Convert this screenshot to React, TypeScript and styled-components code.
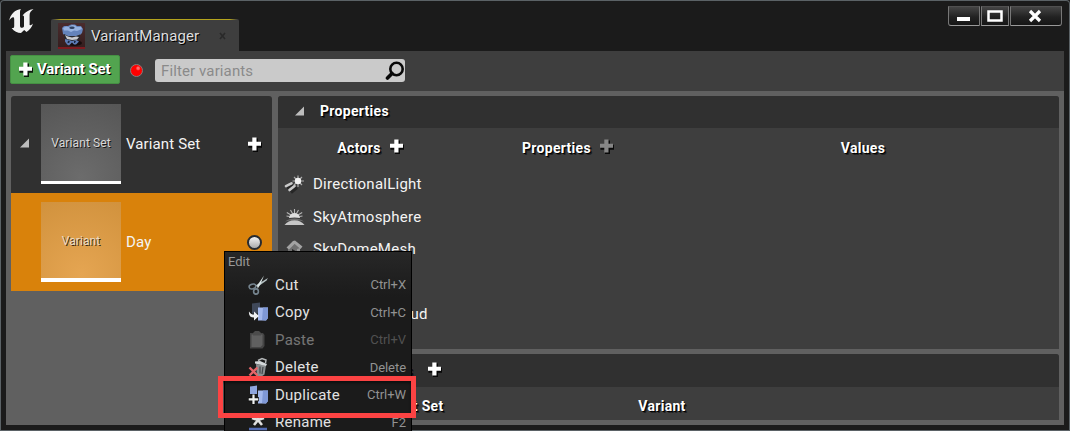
import React from 'react';
import styled, { createGlobalStyle } from 'styled-components';

const Global = createGlobalStyle`
  * { box-sizing: border-box; }
  body { margin: 0; background: #1b1b1b; overflow: hidden; font-family: Roboto, "Liberation Sans", sans-serif; }
  svg { display: block; flex: none; }
`;

const Window = styled.div`
  position: relative;
  width: 1070px;
  height: 431px;
  padding: 1px 6px;
  display: flex;
  flex-direction: column;
  overflow: hidden;
  background: #1b1b1b;
  box-shadow: inset 0 0 0 1px #5b6266;
  border-radius: 4px 4px 0 0;
`;

const TitleBar = styled.header`
  height: 50px;
  flex: none;
  display: flex;
  align-items: flex-start;
  padding-left: 3px;
`;

const Logo = styled.div`
  width: 42px;
  padding-top: 7px;
`;

const Tab = styled.div`
  width: 188px;
  height: 32px;
  margin-top: 18px;
  padding: 1px 0 0 7px;
  display: flex;
  align-items: center;
  background:
    linear-gradient(90deg, #3e3e3e 1%, #b5a41d 5%, #b5a41d 95%, #3e3e3e 99%) 0 0 / 100% 1px no-repeat,
    #3e3e3e;
  border-radius: 2px 2px 0 0;
`;

const TabIcon = styled.div`
  width: 27px;
  height: 26px;
  margin-right: 6px;
  background: linear-gradient(#4a2c2d, #351e1f);
  border-bottom: 2px solid #7d1b20;
`;

const Label = styled.span<{ $size?: number; $color?: string; $bold?: boolean; $spacing?: number; $shadow?: boolean }>`
  font-size: ${p => p.$size ?? 15}px;
  line-height: 18px;
  font-weight: ${p => (p.$bold ? 700 : 400)};
  color: ${p => p.$color ?? '#f4f4f4'};
  letter-spacing: ${p => p.$spacing ?? 0}px;
  white-space: nowrap;
  text-shadow: ${p => (p.$shadow ? '1px 1px 0 #000' : 'none')};
`;

const Heading = styled(Label)`
  font-size: 14px;
  font-weight: 700;
  letter-spacing: 0.3px;
  color: #fff;
  text-shadow: 1px 1px 0 #000, 2px 2px 0 rgba(0, 0, 0, 0.45);
`;

const ThumbLabel = styled(Label)`
  font-size: 12px;
  letter-spacing: 0.1px;
  text-shadow: 1px 1px 0 rgba(0, 0, 0, 0.75);
`;

const TabClose = styled.div`
  margin-left: auto;
  padding-right: 13px;
`;

const WindowButtons = styled.div`
  display: flex;
  gap: 1px;
  margin: 5px 2px 0 auto;
`;

const WindowButton = styled.div<{ $width: number }>`
  width: ${p => p.$width}px;
  height: 20px;
  display: flex;
  align-items: center;
  justify-content: center;
  border: 1px solid #777;
  border-top-color: #505050;
  border-bottom-color: #999;
  background: linear-gradient(#454545, #222 55%, #161616);
  &:first-child { border-bottom-left-radius: 3px; }
  &:last-child { border-bottom-right-radius: 3px; }
`;

const Toolbar = styled.div`
  height: 40px;
  flex: none;
  padding: 4px 4px 0;
  display: flex;
  align-items: flex-start;
  background: #3e3e3e;
`;

const AddButton = styled.div`
  width: 110px;
  height: 29px;
  padding: 0 0 1px 7px;
  display: flex;
  align-items: center;
  gap: 4px;
  background: #52a44f;
  border: 1px solid #459043;
  border-radius: 2px;
`;

const RecordDot = styled.div`
  width: 13px;
  height: 13px;
  margin: 9px 11px 0 10px;
  border: 1px solid #8d7a7a;
  border-radius: 50%;
  background: radial-gradient(circle at 65% 30%, #ff6a6a 0 1px, #ff0000 2.5px);
`;

const Search = styled.div`
  width: 250px;
  height: 23px;
  margin: 4px 0 0 1px;
  padding-left: 6px;
  display: flex;
  align-items: center;
  justify-content: space-between;
  background: #cacaca;
  border-radius: 3px;
`;

const Content = styled.main`
  height: 334px;
  flex: none;
  padding: 5px;
  display: flex;
  gap: 6px;
  background: #606060;
`;

const VariantList = styled.section`
  width: 261px;
`;

const VariantRow = styled.div<{ $selected?: boolean }>`
  height: ${p => (p.$selected ? 98 : 97)}px;
  padding: ${p => (p.$selected ? 9 : 8)}px 10px 0 0;
  display: flex;
  align-items: flex-start;
  background: ${p => (p.$selected ? '#d9820b' : '#303030')};
  border-radius: ${p => (p.$selected ? 0 : '3px 3px 0 0')};
`;

const RowArrow = styled.div`
  width: 30px;
  height: 77px;
  padding-left: 9px;
  display: flex;
  align-items: center;
`;

const Thumb = styled.div<{ $selected?: boolean }>`
  width: 80px;
  height: 80px;
  margin-right: 5px;
  padding-top: 1px;
  display: flex;
  align-items: center;
  justify-content: center;
  border-bottom: ${p => (p.$selected ? 4 : 3)}px solid #fff;
  background: ${p =>
    p.$selected
      ? 'radial-gradient(circle at 50% 95%, #e5a552, #d0913c 105%)'
      : 'radial-gradient(circle at 50% 95%, #6c6c6c, #555 105%)'};
`;

const RowName = styled.div`
  height: 80px;
  flex: 1;
  display: flex;
  align-items: center;
  justify-content: space-between;
`;

const RadioDot = styled.div`
  width: 15px;
  height: 15px;
  border: 2px solid #272b30;
  border-radius: 50%;
  background: linear-gradient(#f4f4f4, #aaa);
`;

const Details = styled.section`
  width: 781px;
  display: flex;
  flex-direction: column;
  gap: 5px;
`;

const Panel = styled.div<{ $height: number }>`
  height: ${p => p.$height}px;
  background: #3e3e3e;
  border-radius: 3px 3px 0 0;
`;

const PanelHeader = styled.div<{ $height: number }>`
  height: ${p => p.$height}px;
  padding: 0 0 2px 17px;
  display: flex;
  align-items: center;
  gap: 16px;
  background: #303030;
  border-radius: 3px 3px 0 0;
`;

const HeaderTitle = styled.div`
  display: flex;
  align-items: center;
  gap: 14px;
`;

const ColumnHeads = styled.div<{ $columns: string; $height: number }>`
  height: ${p => p.$height}px;
  display: grid;
  grid-template-columns: ${p => p.$columns};
  align-items: center;
`;

const ColumnHead = styled.div`
  display: flex;
  align-items: center;
  justify-content: center;
  gap: 8px;
  svg { margin-bottom: 3px; }
`;

const Actor = styled.div`
  height: 32.5px;
  padding-left: 6px;
  display: flex;
  align-items: center;
  gap: 8px;
`;

const ContextMenu = styled.nav`
  position: absolute;
  left: 224px;
  top: 251px;
  width: 188px;
  height: 190px;
  border: 1px solid #000;
  background: linear-gradient(#272727, #1b1b1b 45px);
`;

const MenuTitle = styled.div`
  height: 19px;
  padding-left: 3px;
  display: flex;
  align-items: center;
`;

const MenuItem = styled.div<{ $disabled?: boolean }>`
  height: 27.5px;
  padding: 0 5px 0 24px;
  display: flex;
  align-items: center;
  opacity: ${p => (p.$disabled ? 0.45 : 1)};
  svg { margin: 0 6px 0 -1px; }
`;

const Shortcut = styled.div`
  margin-left: auto;
  padding-top: 1px;
  display: flex;
`;

const Highlight = styled.div`
  position: absolute;
  left: 218px;
  top: 376px;
  width: 198px;
  height: 42px;
  border: 5px solid #fc4343;
  box-shadow: inset 0 2px 3px rgba(0, 0, 0, 0.5);
`;

const Plus = ({ color = '#fff' }: { color?: string }) => (
  <svg width="15" height="15" viewBox="0 0 15 15">
    <path d="M6 1.500h5v4.300h4v5h-4v4.200H6v-4.200H1.500v-5H6z" fill="#000" opacity="0.85" />
    <path d="M5.300 0.500h4.200v4.300h4.500v4H9.500v4.700H5.300V8.800H1v-4h4.300z" fill={color} />
  </svg>
);

const Triangle = () => (
  <svg width="9" height="10" viewBox="0 0 9 10">
    <path d="M9 0.500V9.500H0z" fill="#bdbdbd" />
  </svg>
);

const UnrealLogo = () => (
  <svg width="26" height="27" viewBox="0 0 26 27">
    <path
      d="M12 1C6 1.700 1.200 6.500 0.300 12.500C2 10 3.400 9 4.300 9.300C5.200 9.600 5.200 10.500 5.200 12V18C5.200 20 4.200 20.300 2.600 20C5 23.500 8.500 25 12 25L15.200 22L17.500 24C20.800 22 23 19 24 15.500C22.500 17.200 21.500 17.500 20.600 16.900V7C20.600 4.500 22 3 24.500 1C20 1.800 16.500 4 13.500 7.500C14.500 7.500 15 8 15 9V18.600C14.500 19.400 13.800 19.800 13 19.800C11.600 19.800 11 19 11 17.500V4.500C11 3 11.200 2 12 1Z"
      fill="#f2f2f2"
    />
  </svg>
);

const VariantIcon = () => (
  <svg width="27" height="25" viewBox="0 0 27 25">
    <ellipse cx="16" cy="20" rx="8" ry="3" fill="#170c0d" />
    <path d="M4 5l2-2 4 0 3-1.500 4 0 2 1.500 4 0 2 3-1 4-2 2-5 2H10L5 11z" fill="#6483bb" />
    <path d="M5 5l3-1.500 3 .5 3-2 3 .5 2 1.500 4 0 1 2-5 2-3-.5-3 1.500-3-1.500-4 0z" fill="#95b1df" />
    <ellipse cx="14" cy="4.800" rx="2.700" ry="1.300" fill="#304262" />
    <path d="M6 11l4 2h8l4-1.500v4l-3 2.500H9l-3-3z" fill="#28292f" />
    <path d="M7 12l3 1.500 4 1 4-1 3 .5-2 2.500-5 .5-5-1z" fill="#c9cbd0" />
    <path d="M7 16l4 1 3 1 4-1 3 1.500-3 3h-2l-2-2-3 3-2-1-2-3z" fill="#5d7cb6" />
    <path d="M10 17.500l2 1-1 1.500H9.500zM16 18h2l-1 2h-1z" fill="#1b2741" />
  </svg>
);

const Magnifier = () => (
  <svg width="20" height="21" viewBox="0 0 20 21">
    <circle cx="11.500" cy="9" r="6.200" fill="none" stroke="#080808" strokeWidth="2.600" />
    <path d="M7 13.500L2.500 18" stroke="#080808" strokeWidth="3.600" strokeLinecap="round" />
  </svg>
);

const LightIcon = () => (
  <svg width="21" height="20" viewBox="0 0 21 20">
    <path d="M3 14l6-3M7 18.500l6-5" stroke="#262626" strokeWidth="3" />
    <path d="M2 12.200l5.500-2.800M5.500 16l5-4" stroke="#c9c9c9" strokeWidth="2.600" strokeLinecap="round" />
    <path d="M14 1.500v11.500M8.500 7h11.500M10 3l8 8M18 3l-8 8" stroke="#aaa" strokeWidth="1.200" />
    <circle cx="14" cy="7" r="3.200" fill="#f2f2f2" />
  </svg>
);

const SkyIcon = () => (
  <svg width="21" height="20" viewBox="0 0 21 20">
    <path d="M10.500 2v4M6.500 3l2 3.500M14.500 3l-2 3.500M2.800 5.500L7 8M18.200 5.500L14 8M2.500 9l3 .5M18.500 9l-3 .5" stroke="#b4b4b4" strokeWidth="1.100" />
    <path d="M5 11a5.500 5 0 0 1 11 0q-5.500-1-11 0z" fill="#dedede" />
    <path d="M1 14.500Q5 11.500 10.500 11.500T20 14.500Q10.500 11.500 1 14.500z" fill="#6f6f6f" />
    <path d="M0.500 18Q4 13.300 10.500 13.300T20.500 18z" fill="#c6c6c6" />
  </svg>
);

const MeshIcon = () => (
  <svg width="21" height="20" viewBox="0 0 21 20">
    <path d="M4 9l5-5 7 5v8l-5 2-7-5z" fill="#6f6f6f" />
    <path d="M2.500 8.500L9 2l2-.5 7.500 6-2 2.500L10.500 5 5 10.500z" fill="#a2a2a2" />
    <path d="M8 10l3.500 2v4L8 14z" fill="#262626" />
    <path d="M13 10l3-1v7l-3 1.500z" fill="#999" />
  </svg>
);

const CutIcon = () => (
  <svg width="21" height="20" viewBox="0 0 21 20">
    <path d="M7.500 10.500L20 3L18.500 5.500L9.500 12z" fill="#b4c0c2" />
    <path d="M16 0.500L12.500 9L9.500 14L9.500 10z" fill="#dce7e8" />
    <g fill="none" stroke="#75848f" strokeWidth="1.600">
      <ellipse cx="4.500" cy="11.500" rx="3.400" ry="2.300" transform="rotate(-15 4.500 11.500)" />
      <ellipse cx="8" cy="16.500" rx="2.400" ry="2.600" />
    </g>
  </svg>
);

const CopyIcon = () => (
  <svg width="21" height="20" viewBox="0 0 21 20">
    <path d="M4 1.500l8-1v11H4z" fill="#3f4859" />
    <path d="M10 5.500h10V16l-2 2.500h-8z" fill="#a3b8ec" />
    <path d="M15 5.500h5V16l-2 2.500-4-.5z" fill="#7f98d6" />
    <path d="M1 9.500c-.5 4 1.500 6 5 6v3l5-4.500-5-4.500v3c-2 0-3.500-.5-5-3z" fill="#eef0f2" />
  </svg>
);

const PasteIcon = () => (
  <svg width="21" height="20" viewBox="0 0 21 20">
    <path d="M2 3h13l1.500 2V16l-2 2.500H2z" fill="#777" />
    <path d="M3.500 4.500h11V15l-2 2h-9z" fill="#b5b5b5" />
    <path d="M5 3l2-2h4l2 2v2.500H5z" fill="#888" />
  </svg>
);

const DeleteIcon = () => (
  <svg width="21" height="20" viewBox="0 0 21 20">
    <path d="M8 7l10 1.500-1.500 9-3 2H9z" fill="#8a8f91" />
    <path d="M7 4.500l5-.5 7 3-1 2-11-2.500z" fill="#d3d8da" />
    <path d="M10 3.500l4-2 4 1.500-.5 3" fill="none" stroke="#b4b7b8" strokeWidth="1.500" />
    <path d="M12 9.500v7M15 10l-1 7" stroke="#43474b" strokeWidth="1.200" />
    <path d="M1.500 10.500l8 8M9.500 10.500l-8 8" stroke="#e46468" strokeWidth="2.300" />
  </svg>
);

const DuplicateIcon = () => (
  <svg width="21" height="20" viewBox="0 0 21 20">
    <path d="M2 1.500L9 0.500V9H2z" fill="#8fa6df" />
    <path d="M10 5.500h10V16l-2 2.500h-8z" fill="#a3b8ec" />
    <path d="M15 5.500h5V16l-2 2.500-4-.5z" fill="#7f98d6" />
    <path d="M5.500 9v10.500M0 14.300h11" stroke="#101010" strokeWidth="4" />
    <path d="M5.500 9.500v9.500M0.700 14.300h9.600" stroke="#eef0f0" strokeWidth="2.200" />
  </svg>
);

const RenameIcon = () => (
  <svg width="21" height="20" viewBox="0 0 21 20">
    <path d="M10 2v6M4 6l6 2 6-2M6 13l4-5 4 5" fill="none" stroke="#e0e0e0" strokeWidth="2.600" />
    <path d="M1 17h18" stroke="#536cb4" strokeWidth="2.500" />
  </svg>
);

const menu = [
  { name: 'Cut', keys: 'Ctrl+X', Icon: CutIcon },
  { name: 'Copy', keys: 'Ctrl+C', Icon: CopyIcon },
  { name: 'Paste', keys: 'Ctrl+V', Icon: PasteIcon, disabled: true },
  { name: 'Delete', keys: 'Delete', Icon: DeleteIcon },
  { name: 'Duplicate', keys: 'Ctrl+W', Icon: DuplicateIcon },
  { name: 'Rename', keys: 'F2', Icon: RenameIcon },
];

const actors = [
  { name: 'DirectionalLight', Icon: LightIcon },
  { name: 'SkyAtmosphere', Icon: SkyIcon },
  { name: 'SkyDomeMesh', Icon: MeshIcon },
  { name: 'SkyLight', Icon: LightIcon },
  { name: 'VolumetricCloud', Icon: SkyIcon },
];

export default function App() {
  return (
    <>
      <Global />
      <Window>
        <TitleBar>
          <Logo><UnrealLogo /></Logo>
          <Tab>
            <TabIcon><VariantIcon /></TabIcon>
            <Label $color="#dedede" $spacing={0.12} $shadow>VariantManager</Label>
            <TabClose>
              <svg width="7" height="8" viewBox="0 0 7 8"><path d="M1 1l5 6M6 1L1 7" stroke="#292929" strokeWidth="1.600" /></svg>
            </TabClose>
          </Tab>
          <WindowButtons>
            <WindowButton $width={32}><svg width="16" height="14"><path d="M1 8h13v4H1z" fill="#fff" /></svg></WindowButton>
            <WindowButton $width={28}><svg width="16" height="12"><path d="M1.500 1.500h13v9h-13z" fill="none" stroke="#fff" strokeWidth="2.500" /></svg></WindowButton>
            <WindowButton $width={52}><svg width="17" height="14"><path d="M2 2l10 10M12 2L2 12" stroke="#fff" strokeWidth="3.200" /></svg></WindowButton>
          </WindowButtons>
        </TitleBar>
        <Toolbar>
          <AddButton>
            <Plus />
            <Label $bold $spacing={-0.1} $color="#fff" $shadow>Variant Set</Label>
          </AddButton>
          <RecordDot />
          <Search>
            <Label $color="#8a8a8a" $spacing={0.12}>Filter variants</Label>
            <Magnifier />
          </Search>
        </Toolbar>
        <Content>
          <VariantList>
            <VariantRow>
              <RowArrow><Triangle /></RowArrow>
              <Thumb><ThumbLabel $color="#d8d8d8">Variant Set</ThumbLabel></Thumb>
              <RowName><Label $spacing={0.12}>Variant Set</Label><Plus /></RowName>
            </VariantRow>
            <VariantRow $selected>
              <RowArrow />
              <Thumb $selected><ThumbLabel $color="#eadbc4">Variant</ThumbLabel></Thumb>
              <RowName><Label $spacing={0.12}>Day</Label><RadioDot /></RowName>
            </VariantRow>
          </VariantList>
          <Details>
            <Panel $height={253}>
              <PanelHeader $height={32}><Triangle /><Heading>Properties</Heading></PanelHeader>
              <ColumnHeads $height={40} $columns="185px 210px 380px">
                <ColumnHead><Heading>Actors</Heading><Plus /></ColumnHead>
                <ColumnHead><Heading>Properties</Heading><Plus color="#868686" /></ColumnHead>
                <ColumnHead><Heading>Values</Heading></ColumnHead>
              </ColumnHeads>
              {actors.map(({ name, Icon }) => (
                <Actor key={name}><Icon /><Label $spacing={0.25}>{name}</Label></Actor>
              ))}
            </Panel>
            <Panel $height={66}>
              <PanelHeader $height={33}>
                <Triangle />
                <HeaderTitle><Heading>Dependencies</Heading><Plus /></HeaderTitle>
              </PanelHeader>
              <ColumnHeads $height={37} $columns="258px 252px">
                <ColumnHead><Heading>Variant Set</Heading></ColumnHead>
                <ColumnHead><Heading>Variant</Heading></ColumnHead>
              </ColumnHeads>
            </Panel>
          </Details>
        </Content>
        <ContextMenu>
          <MenuTitle><Label $size={13} $color="#999">Edit</Label></MenuTitle>
          {menu.map(({ name, keys, Icon, disabled }) => (
            <MenuItem key={name} $disabled={disabled}>
              <Icon />
              <Label $color="#e2e2e2" $spacing={0.25}>{name}</Label>
              <Shortcut><Label $size={13} $color="#929292" $spacing={-0.05}>{keys}</Label></Shortcut>
            </MenuItem>
          ))}
        </ContextMenu>
        <Highlight />
      </Window>
    </>
  );
}
